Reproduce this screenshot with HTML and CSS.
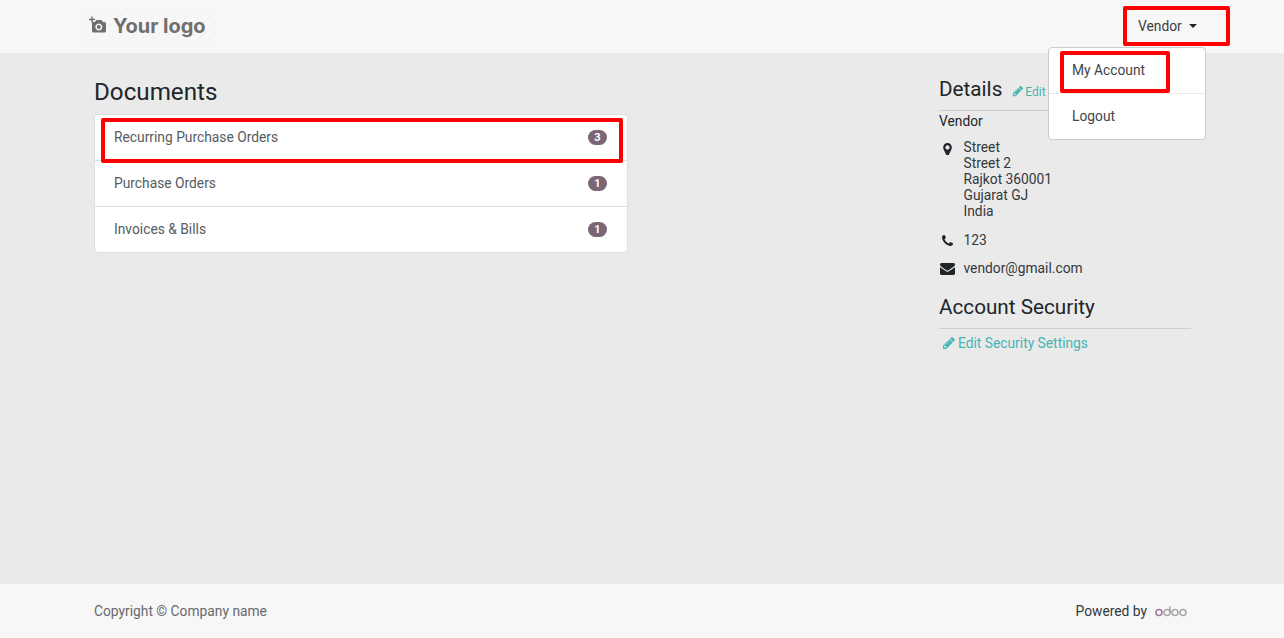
FILE: index.html
```html
<!DOCTYPE html>
<html lang="en">
<head>
<meta charset="utf-8">
<title>Documents</title>
<link rel="stylesheet" href="styles.css">
</head>
<body>
<div class="page">
  <header class="topbar">
    <div class="wrap topbar-row">
      <a class="logo" href="#">
        <svg class="logo-icon" viewBox="0 0 18 18" aria-hidden="true">
          <path d="M3 0.5v6M0 3.5h6" stroke="#6f6f6f" stroke-width="1.4" fill="none"/>
          <path fill-rule="evenodd" fill="#6f6f6f" d="M3 6h3l1.5-2h5L14 6h1.5A1.5 1.5 0 0 1 17 7.500V15a1.500 1.500 0 0 1-1.500 1.500h-11A1.500 1.500 0 0 1 3 15ZM9.800 7.500a3.500 3.500 0 1 0 .01 0ZM9.800 9a2 2 0 1 1-.01 0Z"/>
        </svg>
        <span class="logo-text">Your logo</span>
      </a>
      <div class="user-menu">
        <span class="user-name">Vendor</span>
        <span class="caret"></span>
        <span class="mark mark-user"></span>
        <div class="dropdown">
          <a class="dropdown-item dropdown-item-first" href="#">My Account<span class="mark mark-account"></span></a>
          <a class="dropdown-item dropdown-item-last" href="#">Logout</a>
        </div>
      </div>
    </div>
  </header>

  <main class="wrap content">
    <section class="documents">
      <h1 class="doc-title">Documents</h1>
      <div class="list">
        <a class="list-item" href="#"><span>Recurring Purchase Orders</span><span class="badge">3</span><span class="mark mark-row"></span></a>
        <a class="list-item" href="#"><span>Purchase Orders</span><span class="badge">1</span></a>
        <a class="list-item" href="#"><span>Invoices &amp; Bills</span><span class="badge">1</span></a>
      </div>
    </section>

    <aside class="sidebar">
      <div class="side-head details-head">
        <h2 class="side-title">Details</h2>
        <a class="edit-link" href="#">
          <svg class="pencil pencil-small" viewBox="0 0 1792 1792" aria-hidden="true"><path d="M491 1536l91-91-235-235-91 91v107h128v128h107zm523-928q0-22-22-22-10 0-17 7l-542 542q-7 7-7 17 0 22 22 22 10 0 17-7l542-542q7-7 7-17zm-54-192l416 416-832 832h-416v-416zm683 96q0 53-37 90l-166 166-416-416 166-165q36-38 90-38 53 0 91 38l235 234q37 39 37 91z"/></svg>Edit
        </a>
      </div>
      <div class="contact-name">Vendor</div>
      <div class="contact-row contact-address">
        <span class="contact-icon">
          <svg class="ico-marker" viewBox="0 256 1024 1536" aria-hidden="true"><path d="M768 640q0-106-75-181t-181-75-181 75-75 181 75 181 181 75 181-75 75-181zm256 0q0 109-33 179l-364 774q-16 33-47.500 52t-67.500 19-67.500-19-46.500-52l-365-774q-33-70-33-179 0-212 150-362t362-150 362 150 150 362z" transform="translate(0 256)"/></svg>
        </span>
        <div>Street<br>Street 2<br>Rajkot 360001<br>Gujarat GJ<br>India</div>
      </div>
      <div class="contact-row contact-phone">
        <span class="contact-icon">
          <svg class="ico-phone" viewBox="0 128 1408 1408" aria-hidden="true"><path d="M1408 1240q0 27-10 70.500t-21 68.500q-21 50-122 106-94 51-186 51-27 0-53-3.500t-57.500-12.500-47-14.500-55.500-20.500-49-18q-98-35-175-83-127-79-264-216t-216-264q-48-77-83-175-3-9-18-49t-20.500-55.500-14.500-47-12.500-57.500-3.500-53q0-92 51-186 56-101 106-122 25-11 68.500-21t70.500-10q14 0 21 3 18 6 53 76 11 19 30 54t35 63.500 31 53.500q3 4 17.500 25t21.500 35.500 7 28.500q0 20-28.500 50t-62 55-62 53-28.500 46q0 9 5 22.500t8.500 20.500 14 24 11.500 19q76 137 174 235t235 174q2 1 19 11.500t24 14 20.500 8.500 22.500 5q18 0 46-28.500t53-62 55-62 50-28.500q14 0 28.500 7t35.500 21.500 25 17.500q25 15 53.500 31t63.500 35 54 30q70 35 76 53 3 7 3 21z"/></svg>
        </span>
        <div>123</div>
      </div>
      <div class="contact-row contact-mail">
        <span class="contact-icon">
          <svg class="ico-mail" viewBox="0 256 1792 1408" aria-hidden="true"><path d="M1792 710v794q0 66-47 113t-113 47h-1472q-66 0-113-47t-47-113v-794q44 49 101 87 362 246 497 345 57 42 92.500 65.500t94.500 48 110 24.500h2q51 0 110-24.500t94.500-48 92.500-65.500q170-123 498-345 57-39 100-87zm0-294q0 79-49 151t-122 123q-376 261-468 325-10 7-42.500 30.500t-54 38-52 32.500-57.500 27-50 9h-2q-23 0-50-9t-57.500-27-52-32.500-54-38-42.500-30.500q-91-64-262-182.500t-205-142.500q-62-42-117-115.500t-55-136.500q0-78 41.500-130t118.500-52h1472q65 0 112.500 47t47.500 113z"/></svg>
        </span>
        <div>vendor@gmail.com</div>
      </div>
      <div class="side-head security-head">
        <h2 class="side-title">Account Security</h2>
      </div>
      <a class="security-link" href="#">
        <svg class="pencil" viewBox="0 0 1792 1792" aria-hidden="true"><path d="M491 1536l91-91-235-235-91 91v107h128v128h107zm523-928q0-22-22-22-10 0-17 7l-542 542q-7 7-7 17 0 22 22 22 10 0 17-7l542-542q7-7 7-17zm-54-192l416 416-832 832h-416v-416zm683 96q0 53-37 90l-166 166-416-416 166-165q36-38 90-38 53 0 91 38l235 234q37 39 37 91z"/></svg>Edit Security Settings
      </a>
    </aside>
  </main>

  <footer class="footer">
    <div class="wrap footer-row">
      <span class="copyright">Copyright © Company name</span>
      <span class="powered">Powered by
        <svg class="odoo" viewBox="0 0 33 13" aria-label="odoo" role="img">
          <circle cx="4" cy="7.500" r="3" stroke="#a07a96"/>
          <circle cx="12" cy="7.500" r="3" stroke="#a8a8a8"/>
          <path d="M15 1.500v6" stroke="#a8a8a8"/>
          <circle cx="20" cy="7.500" r="3" stroke="#a8a8a8"/>
          <circle cx="28" cy="7.500" r="3" stroke="#a8a8a8"/>
        </svg>
      </span>
    </div>
  </footer>
</div>
</body>
</html>
```
FILE: styles.css
```css
* { box-sizing: border-box; }
html, body { margin: 0; padding: 0; }
body {
  font-family: Roboto, "Liberation Sans", sans-serif;
  font-size: 13.8px;
  line-height: 21px;
  color: #212529;
  background: #eaeaea;
}
a { text-decoration: none; color: inherit; }
.page { display: flex; flex-direction: column; height: 638px; overflow: hidden; }
.wrap { margin-left: 94px; margin-right: 93px; }

.topbar { height: 53px; flex: none; background: #f7f7f7; }
.topbar-row { height: 53px; display: flex; align-items: center; justify-content: space-between; }
.logo {
  display: flex; align-items: center; gap: 6px;
  width: 134px; height: 36px; margin-left: -12px; padding-left: 7px;
  background: repeating-linear-gradient(135deg, #f7f7f7 0 7px, #f2f2f2 7px 8px);
}
.logo-icon { width: 18px; height: 18px; margin-bottom: 3px; }
.logo-text { font-family: Inter, sans-serif; font-weight: 700; font-size: 20px; color: #6f6f6f; }

.user-menu { position: relative; display: flex; align-items: center; width: 105px; height: 40px; margin-right: -38px; margin-top: -1px; padding-left: 14px; }
.user-name { color: #3a3f44; }
.caret { margin-left: 7px; width: 0; height: 0; border-top: 4px solid #212529; border-left: 4px solid transparent; border-right: 4px solid transparent; }
.mark { position: absolute; border: 4px solid #f00; border-radius: 2px; pointer-events: none; z-index: 1; }
.mark-user { left: -1px; top: 0; width: 107px; height: 40px; }
.dropdown {
  position: absolute; top: 41px; left: -76px; width: 158px; height: 93px;
  background: #fff; border: 1px solid #ccc; border-radius: 4px; z-index: 2;
}
.dropdown-item { position: relative; display: block; padding: 12px 23px 0; color: #3f444a; }
.dropdown-item-first { height: 45px; }
.dropdown-item-last { height: 46px; border-top: 1px solid #e9e9e9; }
.mark-account { left: 11px; top: 3px; width: 110px; height: 42px; }

.content { flex: 1; display: flex; justify-content: space-between; }
.documents { width: 534px; }
.doc-title { margin: 22px 0 0; font-weight: 400; font-size: 24.2px; line-height: 34px; color: #212529; }
.list { position: relative; margin-top: 5px; background: #fff; border: 1px solid #dedede; border-radius: 4px; }
.list-item { position: relative; display: flex; justify-content: space-between; align-items: center; height: 46px; padding: 0 20px 0 19px; color: #555b61; }
.list-item:first-child { height: 45px; }
.list-item + .list-item { border-top: 1px solid #dedede; }
.badge { width: 19px; height: 15px; border-radius: 8px; background: #7c6576; color: #fff; font-size: 11px; font-weight: 700; line-height: 15px; text-align: center; }
.mark-row { left: 6px; top: 3px; width: 522px; height: 45px; }

.sidebar { width: 252px; }
.side-head { display: flex; align-items: baseline; border-bottom: 1px solid #cfcfcf; }
.details-head { margin-top: 22px; height: 36px; gap: 10px; }
.side-title { margin: 0; font-weight: 400; font-size: 20.7px; line-height: 28px; color: #212529; }
.edit-link { color: #45b5b3; font-size: 12px; }
.pencil { width: 14px; height: 14px; fill: #45b5b3; vertical-align: -2px; margin: 0 2px 0 3px; }
.pencil-small { width: 12px; height: 12px; vertical-align: -1px; margin: 0 1px 0 0; }
.contact-name { line-height: 20px; }
.contact-row { display: flex; line-height: 16px; color: #33383d; }
.contact-address { margin-top: 8px; }
.contact-phone { margin-top: 13px; }
.contact-mail { margin-top: 12px; }
.contact-icon { width: 24.5px; flex: none; display: flex; justify-content: center; padding-right: 7.5px; padding-top: 3px; }
.contact-icon svg { fill: #212529; display: block; }
.ico-marker { width: 9px; height: 13px; }
.ico-phone { width: 11px; height: 11px; }
.ico-mail { width: 15px; height: 12px; }
.security-head { margin-top: 17px; height: 36px; }
.security-link { display: block; margin-top: 4px; color: #45b5b3; }

.footer { height: 54px; flex: none; background: #f7f7f7; }
.footer-row { height: 54px; display: flex; align-items: center; justify-content: space-between; }
.copyright { color: #66696d; }
.powered { display: flex; align-items: center; gap: 8px; color: #33383d; }
.odoo { width: 33px; height: 13px; fill: none; stroke-width: 1.6; margin-right: 3px; }
```
